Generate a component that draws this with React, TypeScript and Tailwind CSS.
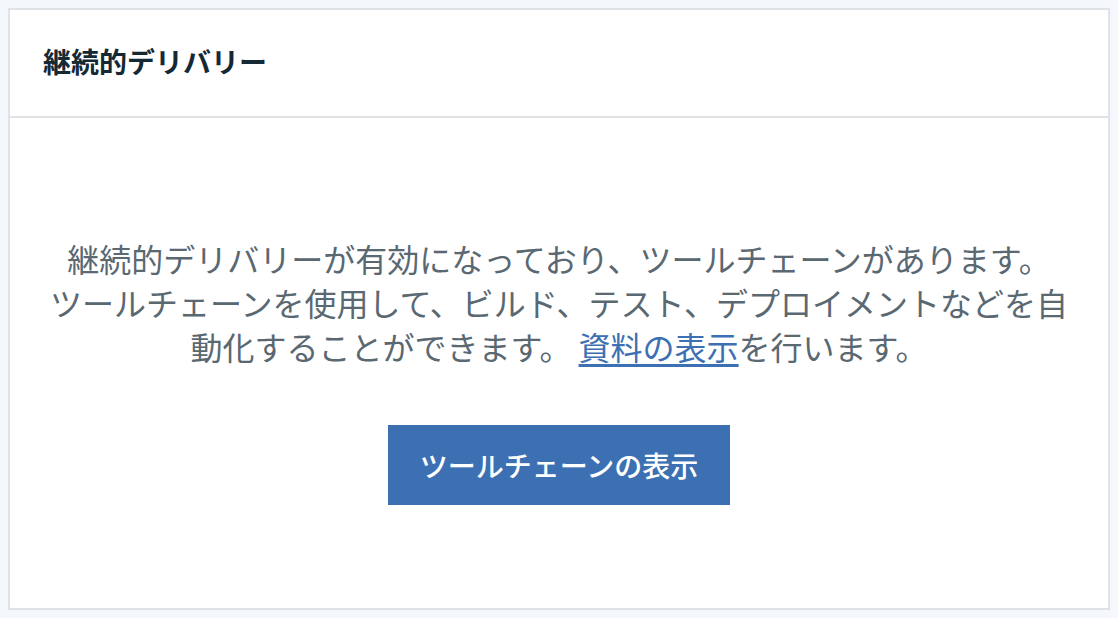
export default function App() {
	return (
		<div
			className="min-h-[618px] bg-[#f4f7fb] p-2"
			style={{ fontFamily: '"Noto Sans CJK JP", "Noto Sans", sans-serif' }}
		>
			<div className="flex h-[602px] flex-col border-2 border-[#dfe3e6] bg-white">
				<div className="flex h-[108px] items-center border-b-2 border-[#dfe3e6] px-[33px] pb-1">
					<h2 className="text-[28px] font-bold leading-none text-[#152935]">
						継続的デリバリー
					</h2>
				</div>
				<div className="flex flex-1 flex-col items-center px-4 pt-[118px]">
					<p className="text-center text-[32px] leading-[44px] text-[#5a6872]">
						継続的デリバリーが有効になっており、ツールチェーンがあります。
						<br />
						ツールチェーンを使用して、ビルド、テスト、デプロイメントなどを自
						<br />
						動化することができます。{" "}
						<a href="#" className="text-[#3d70b2] underline underline-offset-4">
							資料の表示
						</a>
						を行います。
					</p>
					<button className="mt-[57px] h-[80px] bg-[#3d70b2] px-[32px] text-[28px] font-medium text-white">
						ツールチェーンの表示
					</button>
				</div>
			</div>
		</div>
	)
}
